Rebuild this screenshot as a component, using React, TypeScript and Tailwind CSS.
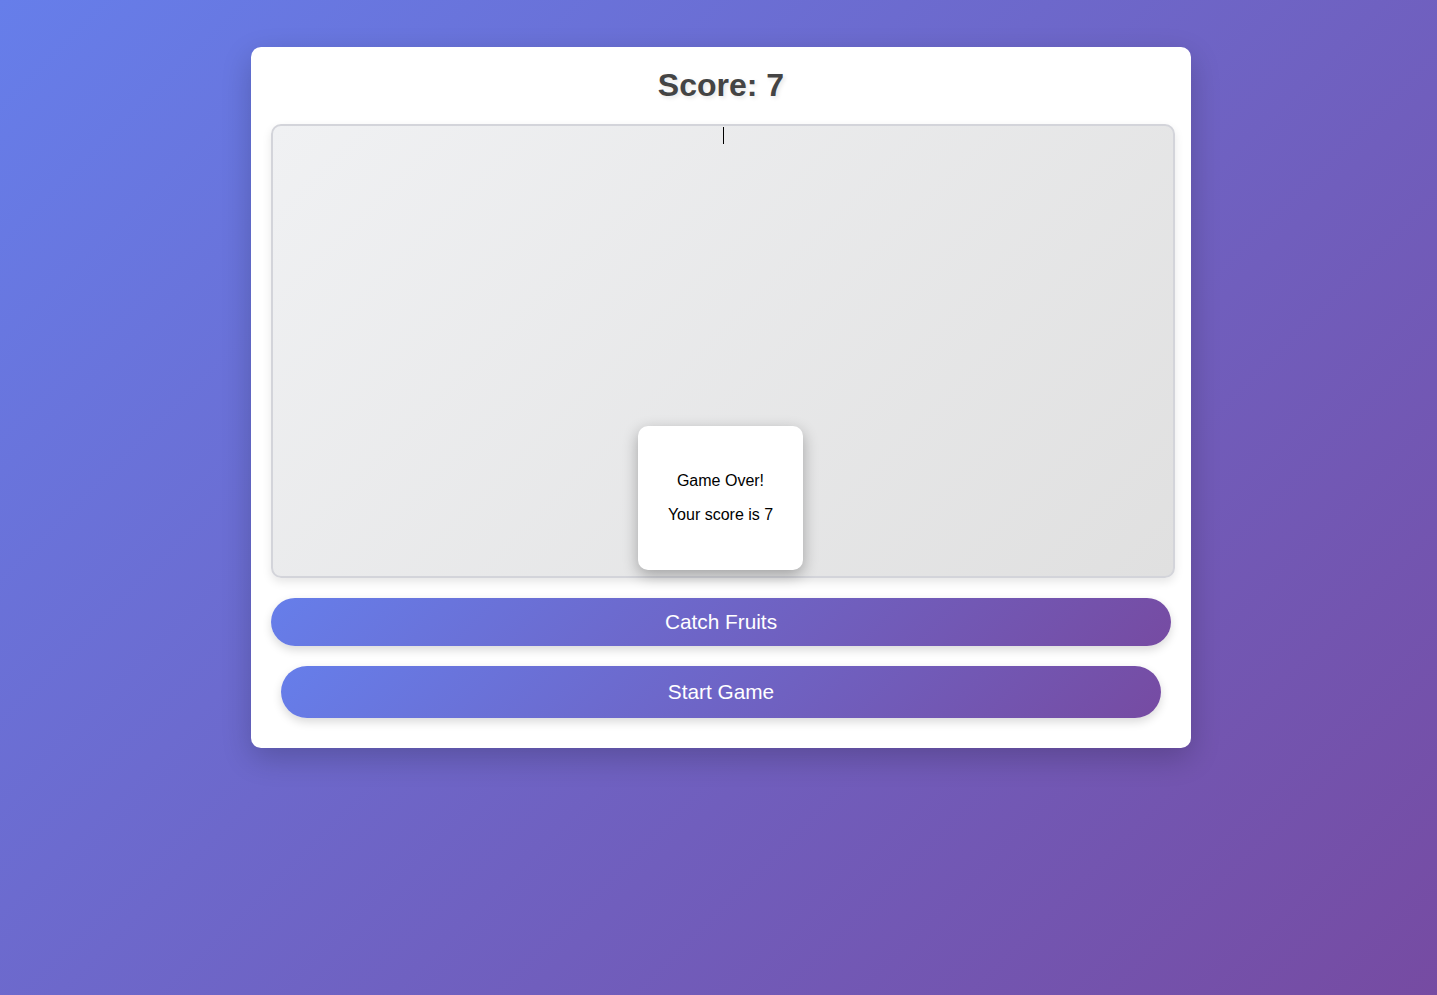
import React from "react";

export default function App() {
  return (
    <div
      className="min-h-[995px] w-full bg-[linear-gradient(135deg,#667eea_0%,#764ba2_100%)] pl-[5px] pt-[47px]"
      style={{ fontFamily: '"Liberation Sans", Arial, sans-serif' }}
    >
      <div className="mx-auto w-[940px] rounded-[10px] bg-white p-5 shadow-[0_10px_30px_rgba(0,0,0,0.2)]">
        <h1 className="m-0 text-center text-[32px] font-bold leading-[37px] text-[#444] [text-shadow:2px_2px_4px_rgba(0,0,0,0.1)]">
          Score: 7
        </h1>
        <div className="relative mt-5 h-[454px] w-[904px] rounded-[10px] border-2 border-[#d3d4da] bg-[linear-gradient(135deg,#f0f1f3_0%,#e0e0e0_100%)] shadow-[0_4px_10px_rgba(0,0,0,0.1)]">
          <div className="absolute left-[450px] top-[1px] h-[17px] w-px bg-black" />
          <div className="absolute left-[365px] top-[300px] flex h-[144px] w-[165px] flex-col items-center justify-center gap-[14px] rounded-[10px] bg-white text-[16px] text-black shadow-[0_5px_15px_rgba(0,0,0,0.3)]">
            <p className="leading-[20px]">Game Over!</p>
            <p className="leading-[20px]">Your score is 7</p>
          </div>
        </div>
        <button className="mt-5 flex h-12 w-full items-center justify-center rounded-full bg-[linear-gradient(135deg,#667eea_0%,#764ba2_100%)] text-[20.8px] text-white shadow-[0_4px_10px_rgba(0,0,0,0.15)]">
          Catch Fruits
        </button>
        <button className="mx-[10px] mb-[10px] mt-5 flex h-[52px] w-[880px] items-center justify-center rounded-full bg-[linear-gradient(135deg,#667eea_0%,#764ba2_100%)] text-[20.8px] text-white shadow-[0_4px_10px_rgba(0,0,0,0.15)]">
          Start Game
        </button>
      </div>
    </div>
  );
}
